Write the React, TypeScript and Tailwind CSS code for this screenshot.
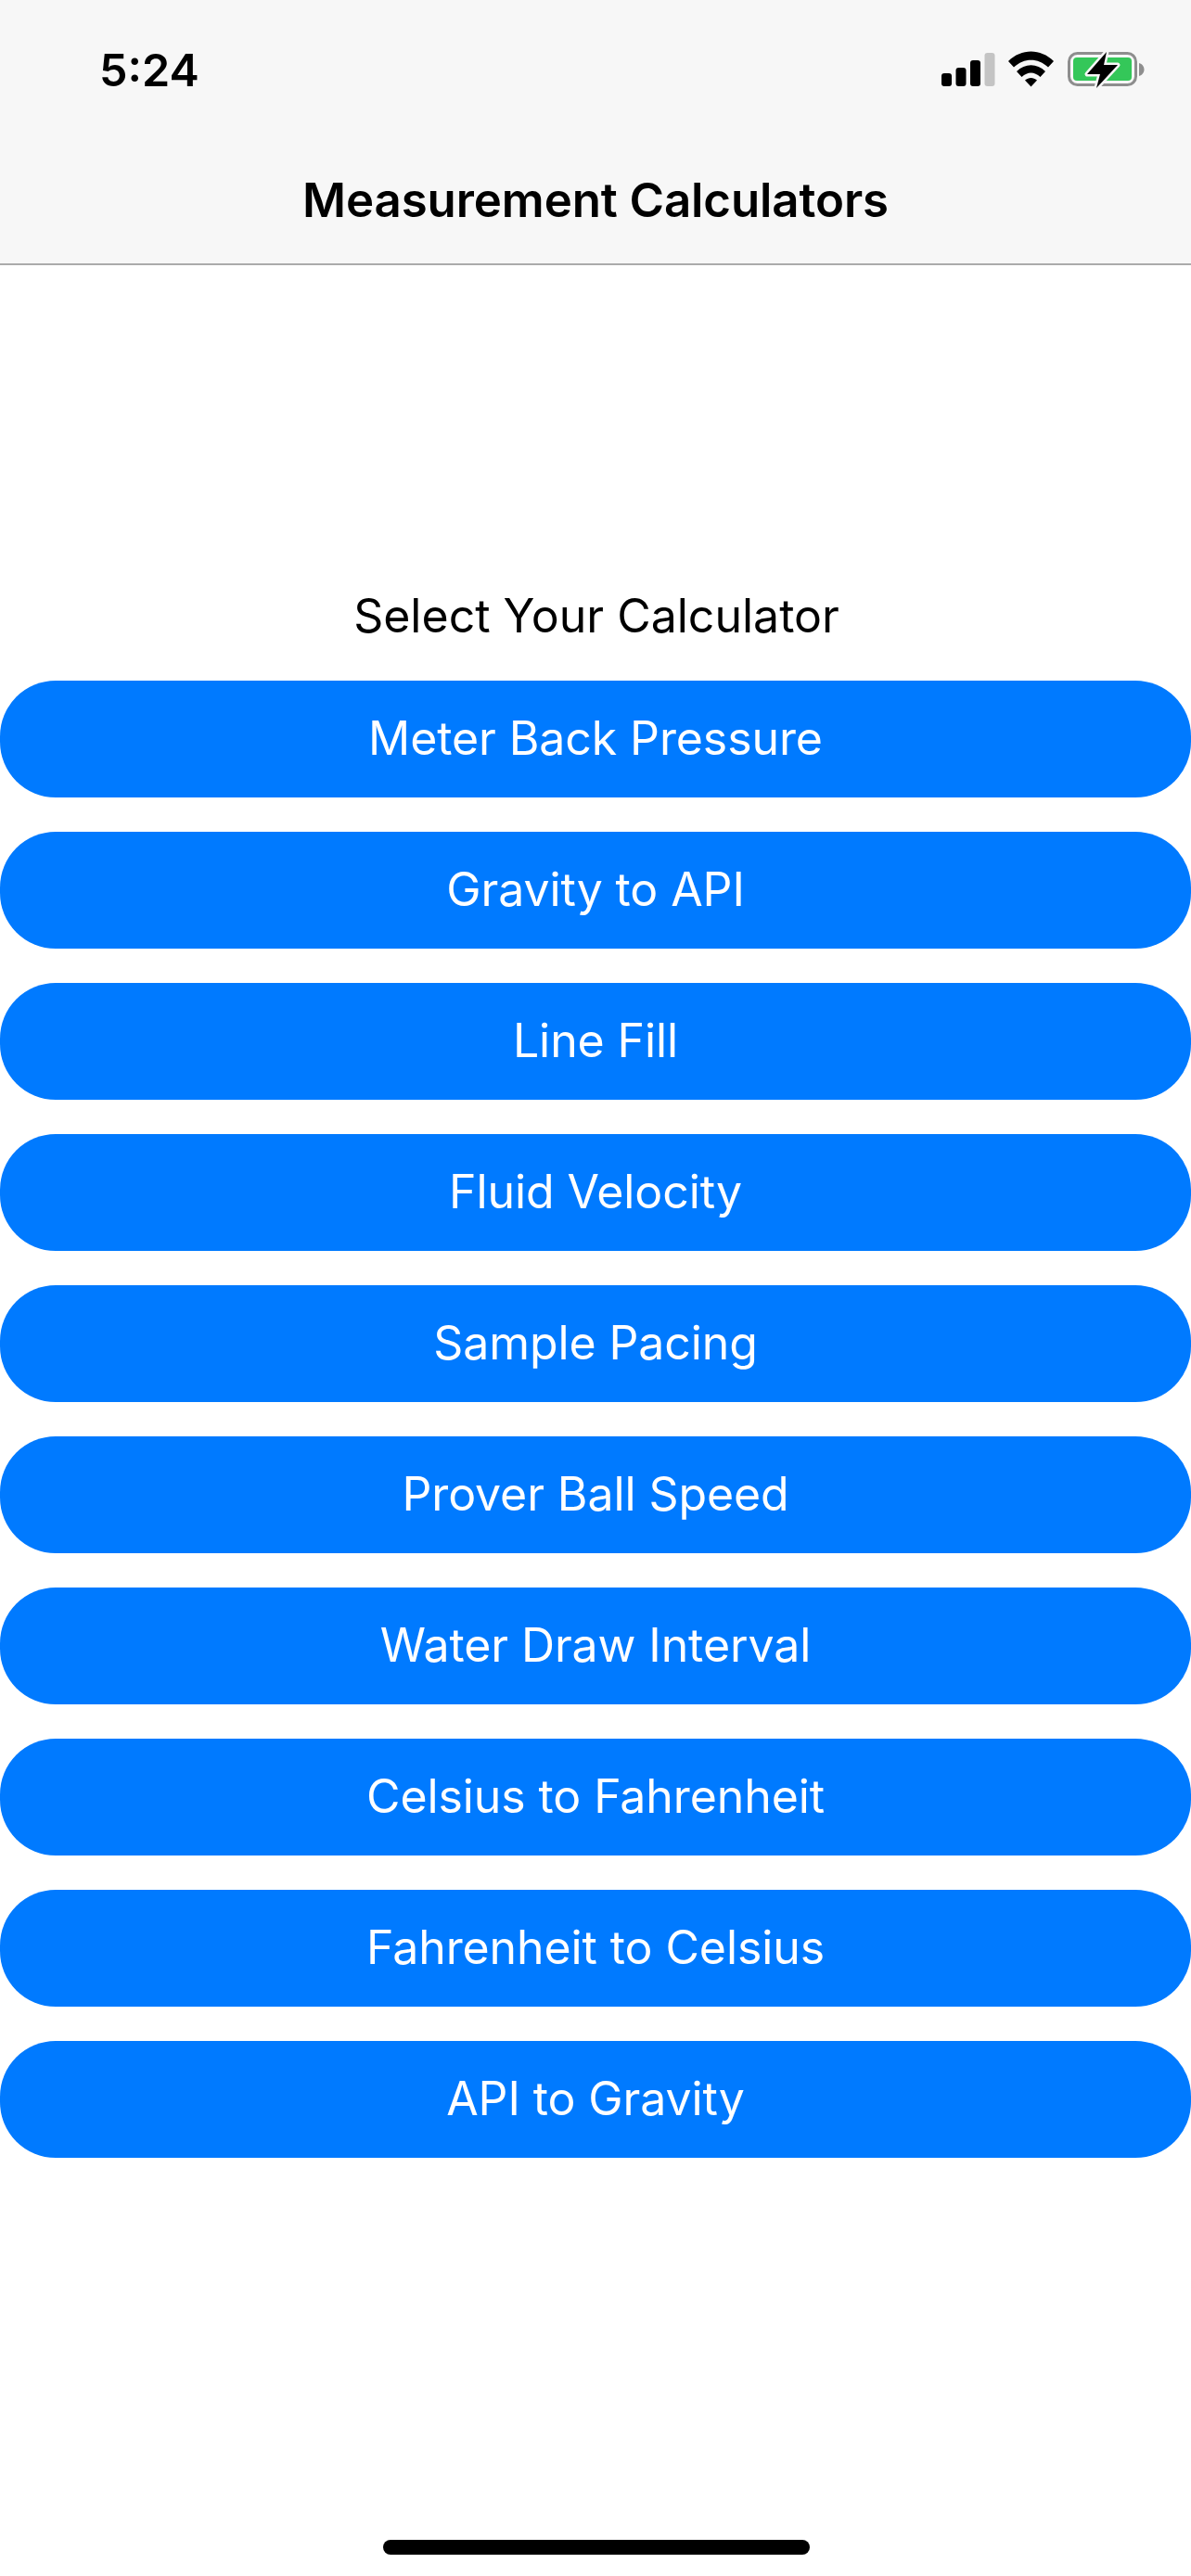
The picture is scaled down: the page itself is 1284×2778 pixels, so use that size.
const items = ["Meter Back Pressure","Gravity to API","Line Fill","Fluid Velocity","Sample Pacing","Prover Ball Speed","Water Draw Interval","Celsius to Fahrenheit","Fahrenheit to Celsius","API to Gravity"];

function StatusIcons() {
  return (
    <svg width="232" height="50" viewBox="0 0 232 50" className="block">
      <rect x="0" y="27" width="11" height="14" rx="3" fill="#000" />
      <rect x="15.5" y="21" width="11" height="20" rx="3" fill="#000" />
      <rect x="31" y="13" width="11" height="28" rx="3" fill="#000" />
      <rect x="46.5" y="5" width="11" height="36" rx="3" fill="#c4c4c4" />
      <path d="M72 14C86 0 107 0 121 14L115 20.5C104 10 89 10 78 20.5Z" fill="#000" />
      <path d="M81 25C90 16 103 16 112 25L106.5 31C100 25 93 25 86.5 31Z" fill="#000" />
      <path d="M90 34.5C94 31 99 31 103 34.5L96.5 41.5Z" fill="#000" />
      <rect x="137.5" y="5.5" width="72" height="34" rx="9" fill="none" stroke="#8e8e8e" strokeWidth="3" />
      <rect x="142" y="10" width="63" height="25" rx="4" fill="#34c759" />
      <path d="M213 16C216.5 17 218.5 20 218.5 23C218.5 26 216.5 29 213 30Z" fill="#8e8e8e" />
      <path d="M178 4L157 28H171L167 43L190 18H175L178 4Z" fill="#000" stroke="#f7f7f7" strokeWidth="5" strokeLinejoin="round" paintOrder="stroke" />
    </svg>
  );
}

export default function App() {
  return (
    <div className="relative h-[2778px] w-[1284px] overflow-hidden bg-white text-black [font-family:Inter,'Liberation_Sans',sans-serif]">
      <header className="h-[286px] border-b-2 border-[#ababab] bg-[#f7f7f7]">
        <div className="flex h-[186px] items-start justify-between">
          <span className="ml-[107px] mt-[50px] text-[48.5px] leading-[52px] font-semibold">5:24</span>
          <div className="mr-[37px] mt-[52px]"><StatusIcons /></div>
        </div>
        <h1 className="text-center text-[51px] leading-[60px] font-semibold tracking-[-0.1px]">Measurement Calculators</h1>
      </header>
      <main className="flex flex-col">
        <p className="ml-[2px] mt-[348px] text-center text-[50px] leading-[60px]">Select Your Calculator</p>
        <div className="mt-[40px] flex flex-col gap-[37px]">
          {items.map((t) => (
            <button key={t} className="flex h-[126px] w-full items-center justify-center rounded-[60px] bg-[#007aff] pb-[2px] text-[50px] tracking-[-0.1px] text-white">{t}</button>
          ))}
        </div>
      </main>
      <div className="absolute bottom-[23px] left-[413px] h-[16px] w-[460px] rounded-full bg-black" />
    </div>
  );
}
